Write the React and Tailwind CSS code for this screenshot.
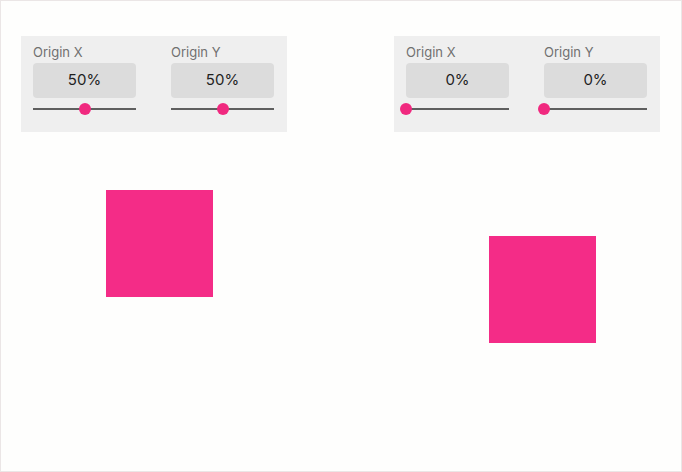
import { useState } from "react";

function Slider({ value }) {
  // track with a thumb sitting on top of it
  return (
    <div className="relative h-3 w-[103px] flex items-center">
      <div className="h-[2px] w-full bg-[#5f5f5f]" />
      <div
        className="absolute top-1/2 h-3 w-3 -translate-x-1/2 -translate-y-1/2 rounded-full bg-[#f0297f]"
        style={{ left: `${value}%` }}
      />
    </div>
  );
}

function Control({ label, value }) {
  return (
    <div className="flex flex-col w-[103px]">
      <span className="text-[13px] leading-4 text-[#707070]">{label}</span>
      <div className="mt-[3px] h-[35px] rounded-[4px] bg-[#dcdcdc] flex items-center justify-center text-[15px] text-[#1f1f1f]">
        {value}%
      </div>
      <div className="mt-[5px]">
        <Slider value={value} />
      </div>
    </div>
  );
}

function Panel({ x, y }) {
  return (
    <div className="w-[266px] h-[96px] bg-[#efefef] pl-[12px] pt-[8px] flex gap-[35px]">
      <Control label="Origin X" value={x} />
      <Control label="Origin Y" value={y} />
    </div>
  );
}

export default function App() {
  const [left] = useState({ x: 50, y: 50 });
  const [right] = useState({ x: 0, y: 0 });

  return (
    <div
      className="w-[682px] h-[472px] bg-[#fefefd] border border-[#ebe6e6] flex overflow-hidden"
      style={{ fontFamily: "Inter, 'Noto Sans', sans-serif" }}
    >
      {/* left demo */}
      <div className="pl-[20px] pt-[35px] flex flex-col">
        <Panel x={left.x} y={left.y} />
        <div className="ml-[85px] mt-[58px] w-[107px] h-[107px] bg-[#f42c87]" />
      </div>

      {/* right demo */}
      <div className="pl-[107px] pt-[35px] flex flex-col">
        <Panel x={right.x} y={right.y} />
        <div className="ml-[95px] mt-[104px] w-[107px] h-[107px] bg-[#f42c87]" />
      </div>
    </div>
  );
}
